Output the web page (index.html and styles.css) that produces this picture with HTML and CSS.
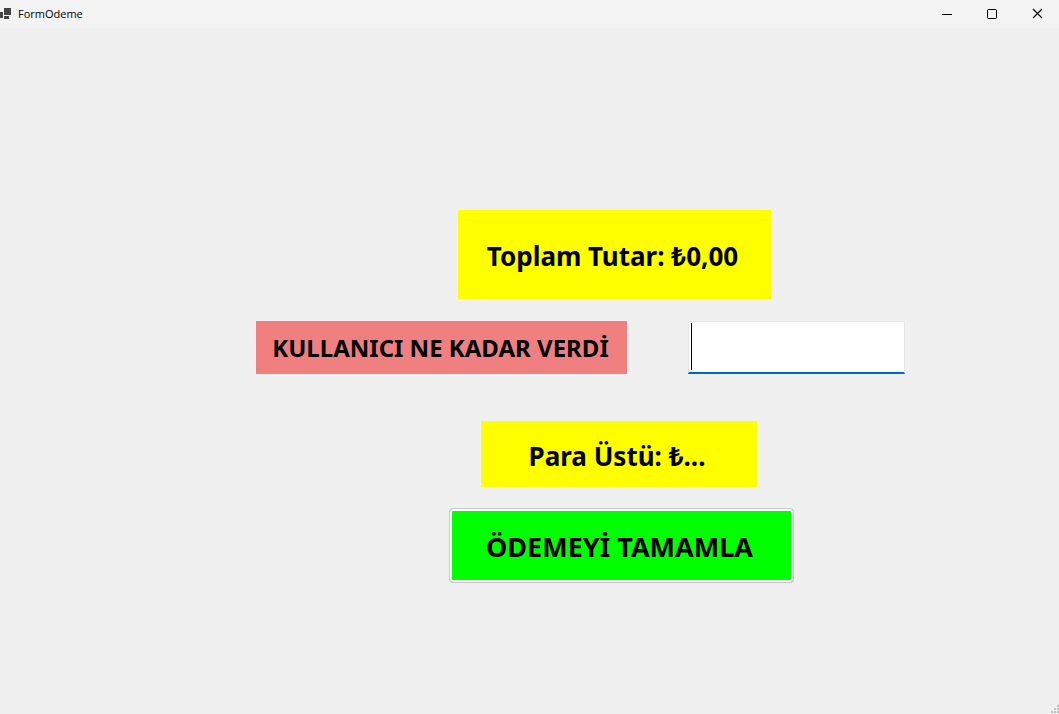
FILE: index.html
```html
<!DOCTYPE html>
<html lang="tr">
<head>
<meta charset="utf-8">
<title>FormOdeme</title>
<link rel="stylesheet" href="styles.css">
</head>
<body>
<header class="titlebar">
  <svg class="app-icon" width="12" height="12" viewBox="0 0 12 12" shape-rendering="crispEdges" aria-hidden="true">
    <path fill="#444" d="M4 0h7v7H4zM0 4h3v6H0zM4 8h5v3H4z"/>
  </svg>
  <h1 class="title">FormOdeme</h1>
  <div class="window-controls">
    <button class="window-button" type="button" aria-label="Simge durumuna küçült">
      <svg width="12" height="12" viewBox="0 0 12 12" aria-hidden="true"><path d="M1 6.5h10" stroke="#000"/></svg>
    </button>
    <button class="window-button" type="button" aria-label="Ekranı kapla">
      <svg width="12" height="12" viewBox="0 0 12 12" aria-hidden="true"><rect x="1.5" y="1.5" width="9" height="9" rx="1" fill="none" stroke="#000"/></svg>
    </button>
    <button class="window-button" type="button" aria-label="Kapat">
      <svg width="12" height="12" viewBox="0 0 12 12" aria-hidden="true"><path d="M2 1l9 9M11 1L2 10" stroke="#000" stroke-width="1.1"/></svg>
    </button>
  </div>
</header>
<main class="content">
  <form class="payment">
    <p class="total">Toplam Tutar: ₺0,00</p>
    <div class="paid">
      <label class="paid-label" for="paid">KULLANICI NE KADAR VERDİ</label>
      <span class="paid-field"><input class="paid-input" id="paid" type="text"></span>
    </div>
    <p class="change">Para Üstü: ₺...</p>
    <button class="submit" type="button">ÖDEMEYİ TAMAMLA</button>
  </form>
</main>
<svg class="grip" width="9" height="9" viewBox="0 0 9 9" shape-rendering="crispEdges" aria-hidden="true">
  <path fill="#bfbfbf" d="M7 0h2v2H7zM4 3h2v2H4zM7 3h2v2H7zM1 6h2v2H1zM4 6h2v2H4zM7 6h2v2H7z"/>
</svg>
</body>
</html>
```
FILE: styles.css
```css
* {
  box-sizing: border-box;
}

body {
  margin: 0;
  min-height: 100vh;
  display: flex;
  flex-direction: column;
  background: #f0f0f0;
  color: #000;
  font-family: "Noto Sans", "Open Sans", sans-serif;
}

.titlebar {
  display: flex;
  align-items: center;
  gap: 6px;
  height: 28px;
  background: #f3f3f3;
}

.app-icon {
  display: block;
}

.title {
  margin: 0;
  flex: 1;
  font-family: "Open Sans", "Noto Sans", sans-serif;
  font-size: 11px;
  font-weight: 400;
  line-height: 28px;
}

.window-controls {
  display: flex;
}

.window-button {
  display: flex;
  align-items: center;
  justify-content: center;
  width: 45px;
  height: 26px;
  padding: 0;
  border: 0;
  background: transparent;
}

.content {
  flex: 1;
  padding: 182px 24px 24px 256px;
}

.payment {
  display: flex;
  flex-direction: column;
  align-items: flex-start;
  font-size: 26px;
  font-weight: 700;
}

.total,
.change {
  display: flex;
  align-items: center;
  justify-content: center;
  margin: 0;
  background: #ff0;
}

.total {
  width: 313px;
  height: 89px;
  margin-left: 202px;
  padding: 2px 4px 0 0;
}

.paid {
  display: flex;
  gap: 61px;
  margin-top: 22px;
}

.paid-label {
  display: flex;
  align-items: center;
  justify-content: center;
  width: 371px;
  height: 53px;
  padding-right: 2px;
  background: #f08080;
  font-size: 24px;
}

.paid-field {
  position: relative;
  display: flex;
  width: 217px;
  height: 53px;
}

/* text caret */
.paid-field::after {
  content: "";
  position: absolute;
  top: 2px;
  left: 3px;
  width: 1px;
  height: 47px;
  background: #000;
}

.paid-input {
  width: 100%;
  padding: 0 4px;
  border: 1px solid #e5e5e5;
  border-bottom: 2px solid #0067c0;
  outline: 0;
  background: #fff;
  font: inherit;
  caret-color: transparent;
}

.change {
  width: 276px;
  height: 66px;
  margin: 47px 0 0 225px;
  padding: 4px 4px 0 0;
}

.submit {
  width: 345px;
  height: 75px;
  margin: 21px 0 0 193px;
  padding: 2px 4px 0 0;
  border: 1px solid #c8c8c8;
  border-radius: 4px;
  background: #0f0;
  box-shadow: inset 0 0 0 2px #fff;
  color: #000;
  font: inherit;
  font-size: 27px;
}

.grip {
  position: fixed;
  right: 0;
  bottom: 0;
}
```
